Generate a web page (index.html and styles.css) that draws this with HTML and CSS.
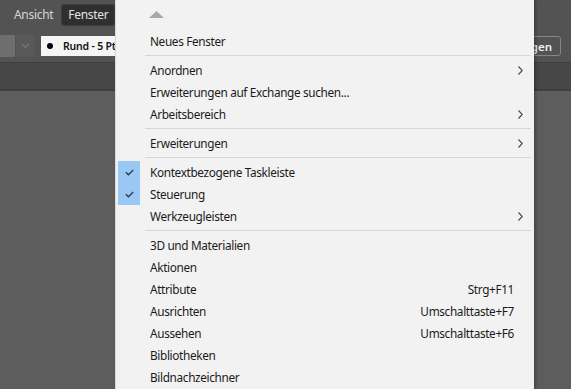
FILE: index.html
```html
<!DOCTYPE html>
<html lang="de">
<head>
  <meta charset="UTF-8" />
  <title>Fenster-Menü</title>
  <link rel="stylesheet" href="styles.css">
</head>
<body>
  <div class="app">
    <div class="menubar">
      <span class="menubar-item">Ansicht</span>
      <span class="menubar-item active">Fenster</span>
    </div>
    <div class="toolbar">
      <div class="swatch"></div>
      <div class="drop-btn">
        <svg width="9" height="6" viewBox="0 0 9 6"><path d="M1 1 L4.5 4.5 L8 1" fill="none" stroke="#777" stroke-width="1.2"/></svg>
      </div>
      <div class="brush-field"><span class="dot"></span>Rund - 5 Pt</div>
      <div class="spacer"></div>
      <button class="tb-btn">Einstellungen</button>
    </div>
    <div class="band"></div>
    <div class="canvas"></div>

    <div class="menu">
      <div class="menu-top">
        <svg width="15" height="7" viewBox="0 0 15 7"><path d="M0 7 L7.5 0 L15 7 Z" fill="#a8a8a8"/></svg>
      </div>
      <div class="item"><span class="check"></span><span class="label">Neues Fenster</span></div>
      <div class="sep"></div>
      <div class="item"><span class="check"></span><span class="label">Anordnen</span><span class="key"></span><span class="arrow"><svg width="5" height="9" viewBox="0 0 5 9"><path d="M0.5 0.5 L4.3 4.5 L0.5 8.5" fill="none" stroke="#444" stroke-width="1.1"/></svg></span></div>
      <div class="item"><span class="check"></span><span class="label">Erweiterungen auf Exchange suchen...</span></div>
      <div class="item"><span class="check"></span><span class="label">Arbeitsbereich</span><span class="key"></span><span class="arrow"><svg width="5" height="9" viewBox="0 0 5 9"><path d="M0.5 0.5 L4.3 4.5 L0.5 8.5" fill="none" stroke="#444" stroke-width="1.1"/></svg></span></div>
      <div class="sep"></div>
      <div class="item"><span class="check"></span><span class="label">Erweiterungen</span><span class="key"></span><span class="arrow"><svg width="5" height="9" viewBox="0 0 5 9"><path d="M0.5 0.5 L4.3 4.5 L0.5 8.5" fill="none" stroke="#444" stroke-width="1.1"/></svg></span></div>
      <div class="sep"></div>
      <div class="item"><span class="check on"><svg width="9" height="7" viewBox="0 0 9 7"><path d="M0.8 3.2 L3.4 5.8 L8.2 1" fill="none" stroke="#2f3a45" stroke-width="1.3"/></svg></span><span class="label">Kontextbezogene Taskleiste</span></div>
      <div class="item"><span class="check on"><svg width="9" height="7" viewBox="0 0 9 7"><path d="M0.8 3.2 L3.4 5.8 L8.2 1" fill="none" stroke="#2f3a45" stroke-width="1.3"/></svg></span><span class="label">Steuerung</span></div>
      <div class="item"><span class="check"></span><span class="label">Werkzeugleisten</span><span class="key"></span><span class="arrow"><svg width="5" height="9" viewBox="0 0 5 9"><path d="M0.5 0.5 L4.3 4.5 L0.5 8.5" fill="none" stroke="#444" stroke-width="1.1"/></svg></span></div>
      <div class="sep"></div>
      <div class="item"><span class="check"></span><span class="label">3D und Materialien</span></div>
      <div class="item"><span class="check"></span><span class="label">Aktionen</span></div>
      <div class="item"><span class="check"></span><span class="label">Attribute</span><span class="key">Strg+F11</span></div>
      <div class="item"><span class="check"></span><span class="label">Ausrichten</span><span class="key">Umschalttaste+F7</span></div>
      <div class="item"><span class="check"></span><span class="label">Aussehen</span><span class="key">Umschalttaste+F6</span></div>
      <div class="item"><span class="check"></span><span class="label">Bibliotheken</span></div>
      <div class="item"><span class="check"></span><span class="label">Bildnachzeichner</span></div>
    </div>
  </div>
</body>
</html>
```

FILE: styles.css
```css
* { margin:0; padding:0; box-sizing:border-box; }
html, body { width:571px; height:389px; overflow:hidden; }
body { font-family:'Noto Sans','Open Sans',sans-serif; background:#5d5d5d; }
.app { position:relative; width:571px; height:389px; display:flex; flex-direction:column; }

.menubar { height:30px; background:#535353; display:flex; align-items:center; padding-left:8px; gap:2px; }
.menubar-item { color:#d6d6d6; font-size:12px; letter-spacing:-0.3px; padding:1px 6px 2px; border-radius:3px; }
.menubar-item.active { background:#2f2f2f; color:#e4e4e4; border:1px solid #3c3c3c; }

.toolbar { height:33px; background:#535353; display:flex; align-items:center; border-bottom:1px solid #3f3f3f; }
.swatch { width:15px; height:22px; background:#6e6e6e; }
.drop-btn { width:18px; height:22px; margin-left:1px; background:#595959; display:flex; align-items:center; justify-content:center; }
.brush-field { height:20px; width:120px; margin-left:7px; background:#f4f4f4; color:#111; font-size:10.5px; font-weight:600; letter-spacing:-0.2px; display:flex; align-items:center; }
.dot { width:6px; height:6px; border-radius:50%; background:#000; margin:0 10px 0 6px; }
.spacer { flex:1; }
.tb-btn { height:20px; margin-right:10px; padding:0 8px; background:transparent; border:1px solid #858585; border-radius:3px; color:#eee; font-family:inherit; font-size:11.5px; font-weight:600; }

.band { height:28px; background:#474747; border-bottom:2px solid #404040; }
.canvas { flex:1; background:#5d5d5d; }

.menu { position:absolute; left:115px; top:0; width:419px; height:389px; background:#f2f2f2; border-left:1px solid #d8d8d8; box-shadow:2px 0 3px rgba(0,0,0,0.25); color:#1b1b1b; font-size:11.8px; letter-spacing:-0.35px; }
.menu-top { height:30px; padding:11px 0 0 33px; }
.menu-top svg { display:block; }
.item { height:22px; display:grid; grid-template-columns:22px 1fr auto 20px; align-items:center; margin-left:2px; }
.check { height:22px; display:flex; align-items:center; justify-content:center; }
.check.on { background:#98c8f3; }
.check svg { margin-top:1px; }
.label { padding-left:10px; white-space:nowrap; }
.key { text-align:right; white-space:nowrap; }
.arrow { padding-left:4px; display:flex; align-items:center; }
.sep { height:1px; background:#d6d6d6; margin:3px 3px 3px 29px; }
```
